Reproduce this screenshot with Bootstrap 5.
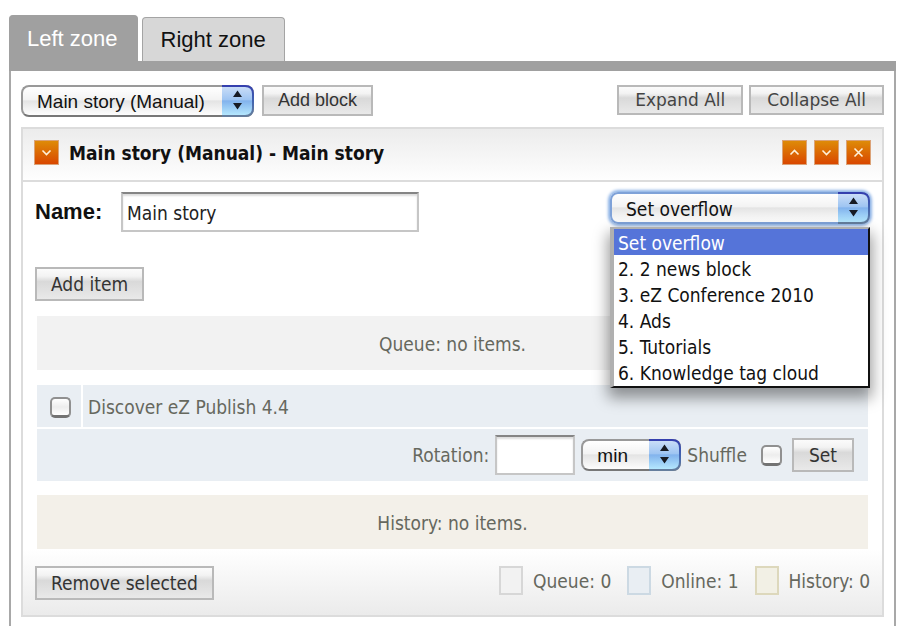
<!DOCTYPE html>
<html lang="en">
<head>
<meta charset="utf-8">
<meta name="viewport" content="width=device-width, initial-scale=1">
<title>Zone editor</title>
<link href="https://cdn.jsdelivr.net/npm/bootstrap@5.3.0/dist/css/bootstrap.min.css" rel="stylesheet">
<style>
:root { --ui: "DejaVu Sans Condensed", "DejaVu Sans", sans-serif; --frame: #a0a0a0; --muted: #66685e; }
body { font-family: var(--ui); font-stretch: condensed; font-size: 19px; line-height: 24px; color: #111; background: #fff; overflow: hidden; }
.page { padding: 15px 15px 0 9px; }
.arial { font-family: "Liberation Sans", Arial, sans-serif; font-stretch: normal; }
.zone-tabs { gap: 4px; border-bottom: 10px solid var(--frame); font-size: 22px; }
.zone-tabs .nav-link { padding: 10px 18px 9px; color: #111; background: #d7d7d7; border: 1px solid #a4a4a4; border-bottom: 0; border-radius: 4px 4px 0 0; margin: 0; }
.zone-tabs .nav-link.active { padding: 11px 19px 10px 17px; color: #fff; background: var(--frame); border-color: var(--frame); }
.zone-body { border: 2px solid #a8a8a8; border-width: 0 2px; padding: 14px 10px 12px; }
.tool { border: 2px solid #b9b9b9; border-radius: 0; padding: 3px 14px; font-size: 19px; line-height: 24px; color: #333; background: linear-gradient(#fbfbfb 0%, #f3f3f3 24%, #d9d9d9 42%, #e9e9e9 100%); }
.tool:hover { border-color: #999; color: #111; }
.tool-sm { font-size: 18px; line-height: 21px; }
.tool-wide { font-family: "DejaVu Sans", sans-serif; font-stretch: normal; font-size: 17px; line-height: 20px; padding: 3px 16px; color: #444; }
.tool-set { padding: 3px 15px; }
.btn-pair { gap: 6px; }
.panel-box { border: 2px solid #dcdcdc; margin-top: 10px; }
.panel-head { border-bottom: 2px solid #dcdcdc; background: linear-gradient(#ececec, #fefefe); height: 53px; padding: 0 11px 4px; }
.panel-head h1 { font-size: 19px; line-height: 24px; padding-left: 10px; }
.sq { width: 25px; height: 25px; padding: 0; border: 1px solid #dba277; background: linear-gradient(#de8b08, #d94700); line-height: 0; }
.sq svg { width: 23px; height: 23px; fill: none; stroke: #fff1da; stroke-width: 2; }
.sq-set { gap: 7px; }
.name-label { font-size: 22px; width: 86px; }
.entry { border: 2px solid #c6c6c6; border-top-color: #858585; height: 40px; padding: 4px 4px 2px; font-size: 19px; color: #222; background: #fff; border-radius: 0; box-shadow: inset 0 2px 2px #ddd; }
.entry-name { width: 298px; }
.entry-num { width: 80px; }
.picker select { appearance: none; display: block; width: 100%; height: 32px; padding: 1px 38px 0 14px; border: 2px solid; border-color: #999 #888 #777 #999; border-radius: 8px; font-size: 19px; line-height: 24px; color: #111; background: linear-gradient(#fff, #f3f3f3 45%, #e4e4e4 50%, #fdfdfd); }
.picker svg { position: absolute; top: 0; right: 0; width: 32px; height: 32px; pointer-events: none; }
.pick-block { width: 233px; }
.pick-unit { width: 100px; }
.pick-over { width: 260px; }
.pick-over select { border-color: #7fa2d8; outline: 0; box-shadow: 0 0 3px 2px #8db3e6; }
.over-menu { position: absolute; z-index: 5; top: 35px; left: 0; width: 260px; padding-bottom: 1px; border: 2px solid #111; border-color: #b0b0b0 #111 #111 #b0b0b0; border-left-width: 4px; background: #fff; box-shadow: 0 8px 14px 2px rgba(0,0,0,.4); }
.over-menu button { display: block; width: 100%; padding: 2px 4px 0; border: 0; text-align: left; background: #fff; color: #111; line-height: 24px; height: 26px; }
.over-menu button[aria-selected="true"] { background: #5574d9; color: #fff; }
.panel-main { padding: 10px 12px 0; }
.name-row { margin-bottom: 35px; }
.queue-area { padding: 15px 2px 0; color: var(--muted); }
.band { height: 54px; display: grid; place-items: center; padding-top: 2px; }
.c-queue { background: #f2f2f2; }
.c-online { background: #e9eef3; }
.c-history { background: #f3f0e9; }
.items { margin: 15px 0 14px; }
.items td { padding: 0; background: #e9eef3; }
.items tr:first-child td { height: 43px; border-bottom: 2px solid #fff; padding-top: 2px; }
.items .pick-cell { width: 45px; border-right: 2px solid #fff; padding-left: 13px; }
.items .title-cell { padding-left: 5px; }
.items tr:last-child td { height: 53px; padding-right: 14px; }
.rotation-row { gap: 6px; }
.tick { appearance: none; display: block; width: 21px; height: 21px; margin: 0; border: 2px solid #909090; border-bottom: 3px solid #737373; border-radius: 5px; background: linear-gradient(#fff, #ededed 50%, #fff); }
.tick:checked { background: #6c94cf; }
.panel-foot { padding: 17px 12px 15px; background: linear-gradient(#fff, #ebebeb); color: var(--muted); }
.legend-set { gap: 16px; margin-top: -5px; }
.legend-item { gap: 10px; }
.chip { width: 24px; height: 29px; border: 2px solid #d7d7d7; }
.chip.c-online { border-color: #ccd9e3; }
.chip.c-history { border-color: #ddd8bc; background: #f2f0e5; }
</style>
<script src="https://cdn.jsdelivr.net/npm/bootstrap@5.3.0/dist/js/bootstrap.bundle.min.js"></script>
</head>
<body>
<svg width="0" height="0" class="position-absolute" aria-hidden="true">
  <defs>
    <linearGradient id="blue" x2="0" y2="1"><stop offset="0" stop-color="#cddff8"/><stop offset=".45" stop-color="#9fc5f2"/><stop offset=".5" stop-color="#82b3ed"/><stop offset="1" stop-color="#b8ebff"/></linearGradient>
    <linearGradient id="edge" x2="0" y2="1"><stop offset="0" stop-color="#343fae"/><stop offset=".5" stop-color="#4164b0"/><stop offset="1" stop-color="#657e9d"/></linearGradient>
    <symbol id="stepper" viewBox="0 0 32 32"><path d="M0 1H23Q31 1 31 9V23Q31 31 23 31H0Z" fill="url(#blue)"/><path d="M0 1H23Q31 1 31 9V23Q31 31 23 31H0" fill="none" stroke="url(#edge)" stroke-width="2"/><path d="M11 12L15.500 5.500L20 12ZM11 18H20L15.500 24.500Z" fill="#171b24"/></symbol>
    <symbol id="up" viewBox="0 0 23 23"><path d="M7.500 13.500L11.500 9.500L15.500 13.500" stroke-width="1.600"/></symbol>
    <symbol id="down" viewBox="0 0 23 23"><path d="M7.500 9.500L11.500 13.500L15.500 9.500" stroke-width="1.600"/></symbol>
    <symbol id="cross" viewBox="0 0 23 23"><path d="M7.500 7.500L15.500 15.500M15.500 7.500L7.500 15.500" stroke-width="1.600"/></symbol>
  </defs>
</svg>
<div class="page min-vh-100 d-flex flex-column">
  <nav class="zone-tabs arial d-flex align-items-end" aria-label="Zones">
    <a class="nav-link active" href="#left" aria-current="page">Left zone</a>
    <a class="nav-link" href="#right">Right zone</a>
  </nav>
  <main class="zone-body flex-grow-1">
    <div class="d-flex align-items-start">
      <div class="picker pick-block position-relative arial me-2"><select aria-label="Block type"><option>Main story (Manual)</option></select><svg aria-hidden="true"><use href="#stepper"/></svg></div>
      <button type="button" class="tool tool-sm arial">Add block</button>
      <div class="btn-pair ms-auto d-flex">
        <button type="button" class="tool tool-wide">Expand All</button>
        <button type="button" class="tool tool-wide">Collapse All</button>
      </div>
    </div>
    <section class="panel-box">
      <header class="panel-head d-flex align-items-center">
        <button type="button" class="sq" aria-label="Toggle block"><svg><use href="#down"/></svg></button>
        <h1 class="fw-bold m-0 flex-grow-1">Main story (Manual) - Main story</h1>
        <div class="sq-set d-flex">
          <button type="button" class="sq" aria-label="Move up"><svg><use href="#up"/></svg></button>
          <button type="button" class="sq" aria-label="Move down"><svg><use href="#down"/></svg></button>
          <button type="button" class="sq" aria-label="Remove block"><svg><use href="#cross"/></svg></button>
        </div>
      </header>
      <div class="panel-main">
        <div class="name-row d-flex">
          <label class="name-label arial fw-bold align-self-center" for="name">Name:</label>
          <input class="entry entry-name" id="name" type="text" value="Main story">
          <div class="picker pick-over position-relative ms-auto">
            <select aria-label="Overflow"><option>Set overflow</option></select><svg aria-hidden="true"><use href="#stepper"/></svg>
            <div class="over-menu" role="listbox" aria-label="Overflow options">
              <button type="button" role="option" aria-selected="true">Set overflow</button>
              <button type="button" role="option" aria-selected="false">2. 2 news block</button>
              <button type="button" role="option" aria-selected="false">3. eZ Conference 2010</button>
              <button type="button" role="option" aria-selected="false">4. Ads</button>
              <button type="button" role="option" aria-selected="false">5. Tutorials</button>
              <button type="button" role="option" aria-selected="false">6. Knowledge tag cloud</button>
            </div>
          </div>
        </div>
        <button type="button" class="tool d-block">Add item</button>
        <div class="queue-area">
          <div class="band c-queue">Queue: no items.</div>
          <table class="items w-100">
            <tbody>
              <tr>
                <td class="pick-cell"><input class="tick" id="item" type="checkbox"></td>
                <td class="title-cell"><label for="item">Discover eZ Publish 4.4</label></td>
              </tr>
              <tr>
                <td colspan="2">
                  <div class="rotation-row d-flex align-items-center justify-content-end">
                    <label for="rotation">Rotation:</label>
                    <input class="entry entry-num" id="rotation" type="text">
                    <div class="picker pick-unit position-relative arial"><select aria-label="Rotation unit"><option>min</option></select><svg aria-hidden="true"><use href="#stepper"/></svg></div>
                    <label for="shuffle">Shuffle</label>
                    <input class="tick ms-2 me-1" id="shuffle" type="checkbox">
                    <button type="button" class="tool tool-set">Set</button>
                  </div>
                </td>
              </tr>
            </tbody>
          </table>
          <div class="band c-history">History: no items.</div>
        </div>
      </div>
      <footer class="panel-foot d-flex align-items-center">
        <button type="button" class="tool">Remove selected</button>
        <div class="legend-set d-flex ms-auto">
          <div class="legend-item d-flex align-items-center"><span class="chip c-queue"></span>Queue: 0</div>
          <div class="legend-item d-flex align-items-center"><span class="chip c-online"></span>Online: 1</div>
          <div class="legend-item d-flex align-items-center"><span class="chip c-history"></span>History: 0</div>
        </div>
      </footer>
    </section>
  </main>
</div>
</body>
</html>
